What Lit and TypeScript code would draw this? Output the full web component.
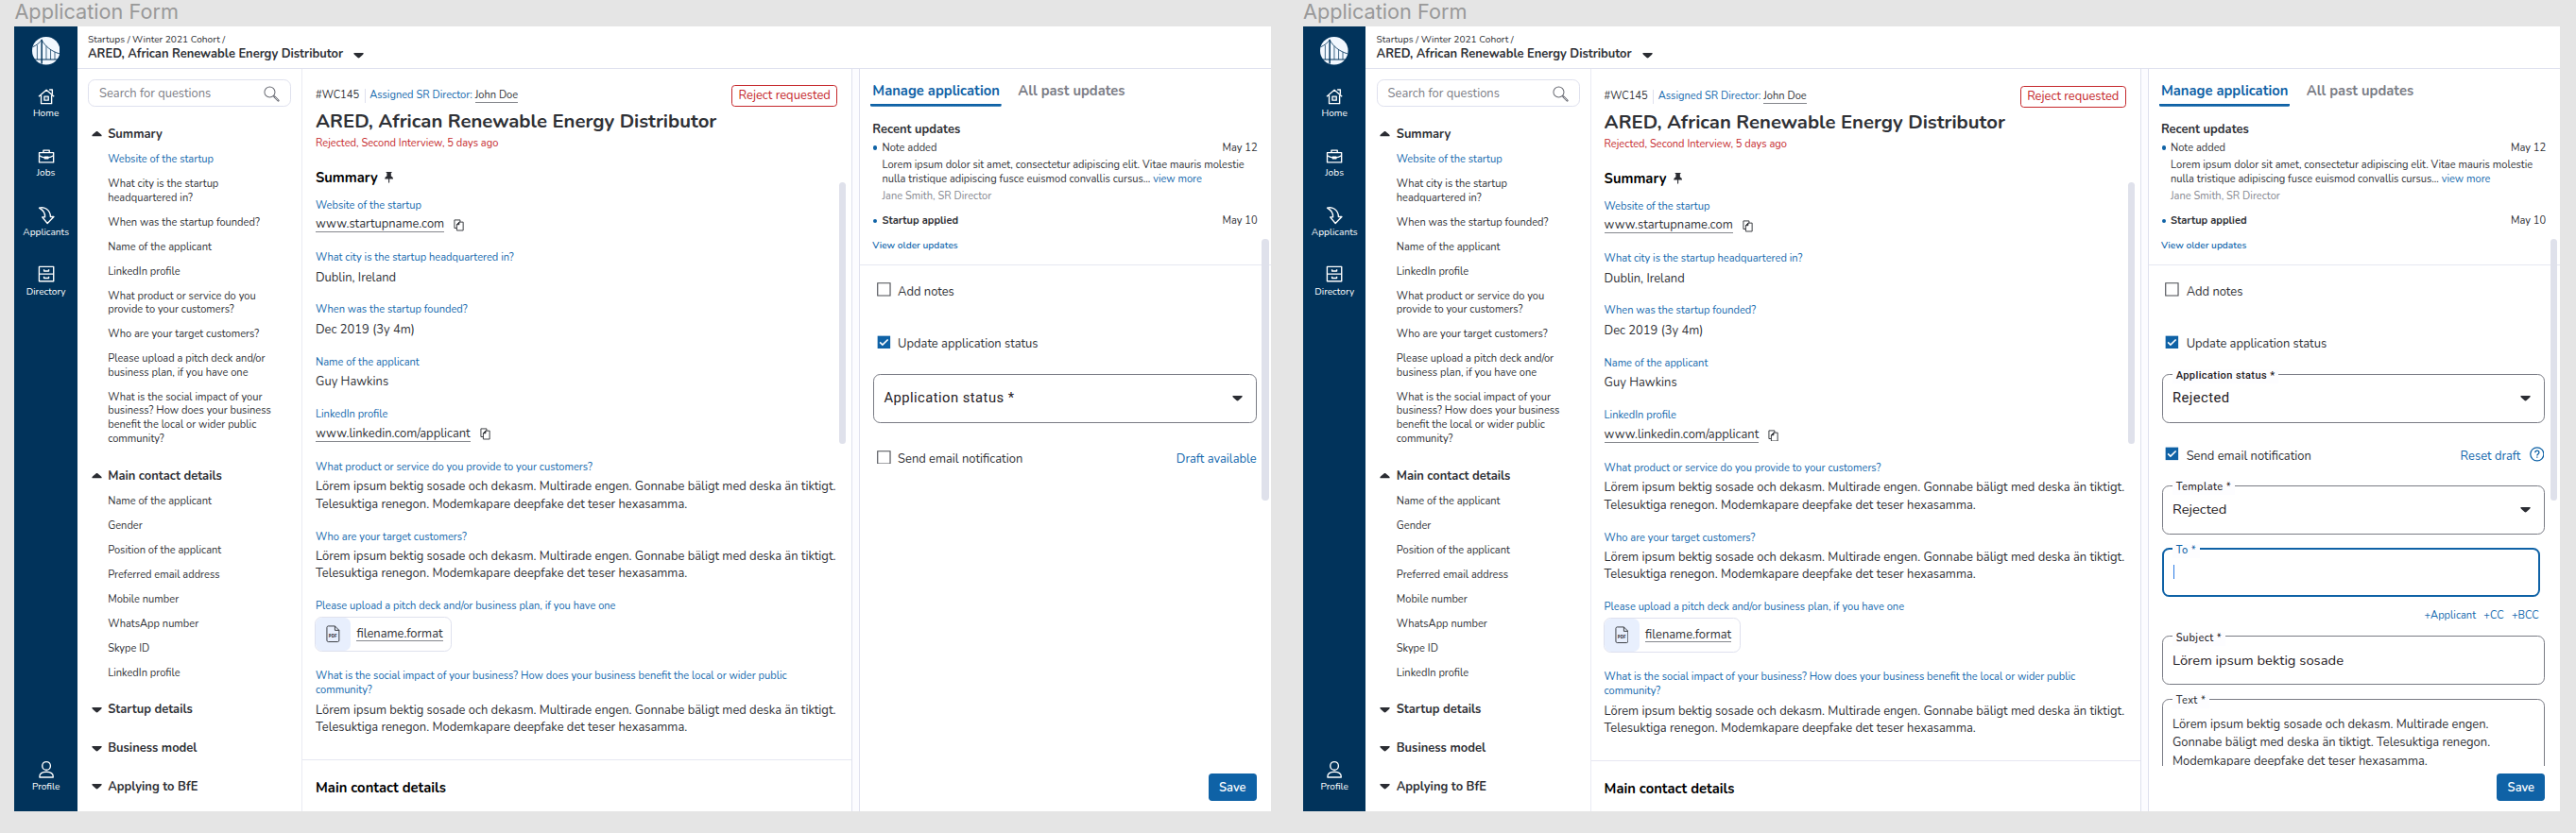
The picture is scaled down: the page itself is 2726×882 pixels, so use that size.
import { LitElement, html, css, svg, nothing } from "lit";
import { customElement, property } from "lit/decorators.js";
import { classMap } from "lit/directives/class-map.js";

const LOREM = "Lörem ipsum bektig sosade och dekasm. Multirade engen. Gonnabe bäligt med deska än tiktigt. Telesuktiga renegon. Modemkapare deepfake det teser hexasamma.";

const SECTIONS = [
  {
    title: "Summary",
    open: true,
    items: [
      "Website of the startup",
      "What city is the startup headquartered in?",
      "When was the startup founded?",
      "Name of the applicant",
      "LinkedIn profile",
      "What product or service do you provide to your customers?",
      "Who are your target customers?",
      "Please upload a pitch deck and/or business plan, if you have one",
      "What is the social impact of your business? How does your business benefit the local or wider public community?",
    ],
  },
  {
    title: "Main contact details",
    open: true,
    items: [
      "Name of the applicant",
      "Gender",
      "Position of the applicant",
      "Preferred email address",
      "Mobile number",
      "WhatsApp number",
      "Skype ID",
      "LinkedIn profile",
    ],
  },
  { title: "Startup details", open: false, items: [] },
  { title: "Business model", open: false, items: [] },
  { title: "Applying to BfE", open: false, items: [] },
];

const ANSWERS = [
  { question: "Website of the startup", answer: "www.startupname.com", kind: "link" },
  { question: "What city is the startup headquartered in?", answer: "Dublin, Ireland", kind: "text" },
  { question: "When was the startup founded?", answer: "Dec 2019 (3y 4m)", kind: "text" },
  { question: "Name of the applicant", answer: "Guy Hawkins", kind: "text" },
  { question: "LinkedIn profile", answer: "www.linkedin.com/applicant", kind: "link" },
  { question: "What product or service do you provide to your customers?", answer: LOREM, kind: "text" },
  { question: "Who are your target customers?", answer: LOREM, kind: "text" },
  { question: "Please upload a pitch deck and/or business plan, if you have one", answer: "filename.format", kind: "file" },
  { question: "What is the social impact of your business? How does your business benefit the local or wider public community?", answer: LOREM, kind: "text" },
];

const icons = {
  home: svg`<path d="M3.2 12.2 12 4.6l8.8 7.6M6 10.8v9.4h12v-9.4M15.8 5v-.6h3v5.2"/><path d="M9.7 12h4.6v4.4H9.7z"/><path d="M11.7 13.9h.6"/>`,
  jobs: svg`<path d="M3.8 8.2h16.4v11.2H3.8z"/><path d="M8.6 8V5.6h6.8V8M3.8 11.6c2.6 1.9 5.2 2.4 8.2 2.4s5.600-.5 8.200-2.400"/><path d="M10 13.300h4v1.600h-4z"/>`,
  applicants: svg`<path d="M3.800 3.400C9 1.700 16.600 5 16.700 13.600h3.800l-7.300 7.500-6-7.100h3.200C10.800 9.500 8.400 6 3.800 3.400z"/>`,
  directory: svg`<path d="M3.700 3.700h16.600v16.600H3.700zM3.700 12h16.600M9.300 6.700v1.900h5.400V6.700M9.300 14.900v1.900h5.400v-1.900"/>`,
  profile: svg`<circle cx="12" cy="7.500" r="4.700"/><path d="M4.200 20.600c-.5-4.300 3-6.200 7.800-6.200s8.300 1.900 7.800 6.200z"/>`,
};

const MENU = [
  { label: "Home", icon: icons.home },
  { label: "Jobs", icon: icons.jobs },
  { label: "Applicants", icon: icons.applicants },
  { label: "Directory", icon: icons.directory },
];

const caret = (up = false) => html`<svg class="caret" width="12" height="8" viewBox="0 0 12 8">
  ${up
    ? svg`<path d="M.6 6.900C.2 6.200.600 5.300 1.300 4.700L4.900 1.500c.7-.6 1.500-.6 2.200 0l3.600 3.200c.7.6 1.100 1.500.7 2.200z" fill="#2b2d33"/>`
    : svg`<path d="M.6 1.100C.2 1.800.600 2.700 1.300 3.300L4.900 6.500c.7.6 1.500.6 2.200 0l3.600-3.200c.7-.6 1.100-1.500.7-2.200z" fill="#2b2d33"/>`}
</svg>`;

@customElement("application-frame")
export class ApplicationFrame extends LitElement {
  static styles = css`
    :host {
      display: flex;
      zoom: 0.9236;
      width: 1440px;
      height: 900px;
      overflow: hidden;
      background: #fff;
      color: #2f3136;
      font: 400 12px/16px Nunito, "Open Sans", sans-serif;
    }

    * {
      box-sizing: border-box;
    }

    /* dark menu */
    .menu {
      width: 72px;
      flex: none;
      background: #01335b;
      color: #fff;
      display: flex;
      flex-direction: column;
      align-items: center;
      gap: 28px;
      padding: 12px 0 20px;
      font-size: 11px;
    }

    .menu__logo {
      margin-bottom: -4px;
    }

    .menu__item {
      display: flex;
      flex-direction: column;
      align-items: center;
    }

    .menu__item--last {
      margin-top: auto;
    }

    .menu__icon {
      width: 24px;
      height: 24px;
      fill: none;
      stroke: #fff;
      stroke-width: 1.5;
      stroke-linejoin: round;
    }

    .main {
      flex: 1;
      display: flex;
      flex-direction: column;
      min-width: 0;
    }

    .header {
      height: 48px;
      flex: none;
      padding: 8px 12px 0;
      border-bottom: 1px solid #dfe1ee;
    }

    .header__path {
      font-size: 11px;
      line-height: 15px;
    }

    .header__title {
      display: flex;
      align-items: center;
      gap: 12px;
      font-size: 14px;
      line-height: 19px;
      font-weight: 700;
    }

    .body {
      flex: 1;
      display: flex;
      min-height: 0;
    }

    /* question list */
    .questions {
      width: 258px;
      flex: none;
      padding: 12px 12px 0;
      border-right: 1px solid #eaebf3;
    }

    .search {
      display: flex;
      align-items: center;
      justify-content: space-between;
      height: 32px;
      padding: 2px 12px 0;
      margin-bottom: 21.4px;
      border: 1px solid #dfe1ee;
      border-radius: 8px;
      color: #7b7d86;
      font-size: 14px;
    }

    .section {
      margin-bottom: 24px;
    }

    .section__title {
      display: flex;
      align-items: center;
      gap: 7px;
      padding-left: 4px;
      font-size: 14px;
      line-height: 20px;
      font-weight: 700;
    }

    .section__items {
      display: flex;
      flex-direction: column;
      gap: 12px;
      padding: 12px 10px 0 23px;
    }

    .section__item--active {
      color: #1268ad;
    }

    /* answers */
    .details {
      position: relative;
      width: 630px;
      flex: none;
      border-right: 1px solid #dfe1ee;
      display: flex;
      flex-direction: column;
    }

    .details__head {
      display: flex;
      justify-content: space-between;
      align-items: flex-start;
      padding: 19.4px 16px 0 15px;
    }

    .details--lower .details__head {
      padding-top: 20.5px;
    }

    .details__meta {
      display: flex;
      align-items: center;
      gap: 5px;
      padding-top: 4px;
    }

    .details__id {
      padding-right: 6px;
      border-right: 1px solid #dfe1ee;
    }

    .blue {
      color: #1268ad;
    }

    .underlined {
      border-bottom: 1px solid #85878d;
      line-height: 16px;
    }

    .badge {
      height: 24px;
      padding: 0 7px;
      border: 1px solid #c5282c;
      border-radius: 4px;
      color: #c5282c;
      font-size: 14px;
      line-height: 23px;
    }

    .details__title {
      width: max-content;
      margin: 3px 0 1.600px 15px;
      font-size: 22px;
      line-height: 30px;
      font-weight: 700;
    }

    .details__status {
      padding-left: 15px;
      color: #c5282c;
    }

    .details__heading {
      display: flex;
      align-items: center;
      gap: 8px;
      margin: 0;
      padding-left: 15px;
      color: #000;
      font-size: 16px;
      line-height: 22px;
      font-weight: 700;
    }

    .details__heading--summary {
      margin-top: 20.6px;
    }

    .answers {
      display: flex;
      flex-direction: column;
      gap: 20px;
      padding: 13px 16px 26.5px 15px;
      border-bottom: 1px solid #e6e7f1;
      margin-bottom: 20.2px;
    }

    .answer {
      display: flex;
      flex-direction: column;
      align-items: flex-start;
      gap: 4px;
    }

    .answer__question {
      color: #1268ad;
    }

    .answer__value {
      display: flex;
      align-items: center;
      gap: 11px;
      min-height: 20px;
      font-size: 14px;
      line-height: 20px;
    }

    .file {
      display: flex;
      align-items: center;
      gap: 7px;
      width: 157px;
      height: 41px;
      margin: -1.500px 0 0.500px -1px;
      border: 1px solid #dfe1ee;
      border-radius: 8px;
      font-size: 14px;
      overflow: hidden;
    }

    .file__type {
      display: flex;
      align-items: center;
      justify-content: center;
      width: 40px;
      height: 100%;
      border-radius: 7px;
      background: #e8effd;
    }

    .file__label {
      font: 700 5px "Open Sans", sans-serif;
      fill: #2b2d33;
    }

    .scrollbar {
      position: absolute;
      width: 8px;
      height: 300px;
      border-radius: 4px;
      background: #dfe1eb;
    }

    .scrollbar--details {
      top: 130.5px;
      right: 6px;
    }

    .scrollbar--manage {
      top: 195.5px;
      right: 3px;
    }

    .gutter {
      width: 8px;
      flex: none;
      background: #fcfcff;
    }

    /* right panel */
    .manage {
      position: relative;
      flex: 1;
      min-width: 0;
      display: flex;
      flex-direction: column;
      border-left: 1px solid #dfe1ee;
    }

    .tabs {
      display: flex;
      gap: 17px;
      padding: 15px 0 0 12px;
      font-size: 16px;
      line-height: 22px;
      font-weight: 700;
      color: #7b7d86;
    }

    .tabs__tab {
      padding: 0 2px 4px;
      height: 29px;
    }

    .tabs__tab--active {
      color: #0f62a6;
      background: linear-gradient(#0f62a6, #0f62a6) bottom / 100% 3px no-repeat;
      border-radius: 2px;
    }

    .updates {
      padding: 16.5px 16px 13.5px 14px;
      border-bottom: 1px solid #e6e7f1;
    }

    .updates__heading {
      margin: 0 0 3px;
      font-size: 14px;
      line-height: 20px;
      font-weight: 700;
    }

    .updates__row {
      display: flex;
      align-items: center;
    }

    .updates__row::before {
      content: "";
      width: 4.500px;
      height: 4.500px;
      margin: -1px 5.500px 0 1px;
      border-radius: 50%;
      background: #0f62a6;
    }

    .updates__date {
      margin-left: auto;
    }

    .updates__note {
      padding: 4px 0 4px 11px;
    }

    .updates__author {
      padding-left: 11px;
      margin-bottom: 12px;
      color: #85878f;
    }

    .bold {
      font-weight: 700;
    }

    .updates__older {
      margin-top: 12px;
      font-size: 11px;
      font-weight: 600;
      color: #1268ad;
    }

    .form {
      flex: 1;
      min-height: 0;
      overflow: hidden;
      padding: 19px 17px 0 15px;
    }

    .check {
      display: flex;
      align-items: center;
      height: 20px;
      padding-top: 2px;
      margin-bottom: 40px;
      font-size: 14px;
    }

    .check--status {
      margin-bottom: 25px;
    }

    .check--email {
      margin: 31px 0 0;
    }

    .check--email-open {
      margin: 27.5px 0 24.5px;
    }

    .check__box {
      width: 16px;
      height: 16px;
      margin: -5px 8px 0 4px;
    }

    .check__action {
      display: flex;
      align-items: center;
      gap: 10px;
      margin-left: auto;
      color: #1268ad;
    }

    .check__help {
      margin: -4px 1px 0 0;
    }

    .field {
      position: relative;
      display: flex;
      align-items: center;
      justify-content: space-between;
      height: 56px;
      padding: 0 15px 0 11px;
      margin-bottom: 16px;
      border: 1px solid #797b84;
      border-radius: 8px;
      font-size: 16px;
      color: #1f2024;
    }

    .field--roboto {
      font-family: Roboto, sans-serif;
      letter-spacing: 0.5px;
    }

    .field--focused {
      width: 433px;
      margin-bottom: 14px;
      border: 2.200px solid #0f62a6;
    }

    .field--tall {
      height: 140px;
      align-items: flex-start;
      padding-top: 18.500px;
      font-size: 14px;
      line-height: 21px;
      color: #2f3136;
    }

    .field__label {
      position: absolute;
      top: -6px;
      left: 11px;
      padding: 0 4px;
      background: #fdfdff;
      font-size: 12px;
      line-height: 16px;
      font-weight: 500;
      letter-spacing: 0.4px;
    }

    .field--focused .field__label {
      top: -7px;
      left: 10px;
      color: #0f62a6;
    }

    .field__cursor {
      width: 1.100px;
      height: 17px;
      margin-bottom: 2px;
      background: #2c7be5;
    }

    .recipients {
      display: flex;
      justify-content: flex-end;
      gap: 9px;
      width: 432px;
      margin-bottom: 14.500px;
      color: #1268ad;
    }

    .footer {
      height: 52px;
      flex: none;
      display: flex;
      justify-content: flex-end;
      padding: 8px 17px 0 0;
    }

    .save {
      width: 55px;
      height: 32px;
      border: 0;
      border-radius: 4px;
      background: #0f62a6;
      color: #fff;
      font: 600 14px/20px Nunito, "Open Sans", sans-serif;
      padding: 1px 0 0;
    }
  `;

  // true shows the form with the email fields opened
  @property({ type: Boolean })
  rejected = false;

  renderMenu() {
    return html`<nav class="menu">
      <svg class="menu__logo" width="32" height="32" viewBox="0 0 32 32">
        <circle cx="16" cy="16" r="16" fill="#f2f8ff"/>
        <g fill="none" stroke="#01335b">
          <path d="M1 11.500C5 9.500 8.500 7 11 3.600c4 7.400 11 13 20.500 15.800" stroke-width=".9"/>
          <path d="M1.500 26h29" stroke-width="1.100"/>
          <path d="M11 3v28" stroke-width="1.600"/>
          <path d="M5.800 9.500V26M16.200 10.500V26M21.200 14.800V26M26 17.500V26" stroke-width=".8"/>
        </g>
      </svg>
      ${MENU.map((item) => html`<div class="menu__item">
        <svg class="menu__icon" viewBox="0 0 24 24">${item.icon}</svg>
        <span>${item.label}</span>
      </div>`)}
      <div class="menu__item menu__item--last">
        <svg class="menu__icon" viewBox="0 0 24 24">${icons.profile}</svg>
        <span>Profile</span>
      </div>
    </nav>`;
  }

  renderQuestions() {
    return html`<aside class="questions">
      <div class="search">
        <span>Search for questions</span>
        <svg width="18" height="18" viewBox="0 0 18 18" fill="none" stroke="#696b73">
          <circle cx="7" cy="7" r="6" stroke-width="1.100"/>
          <path d="m11.300 11.300 1.200 1.200" stroke-width="1.100"/>
          <path d="m12.500 12.500 4.300 4.300" stroke-width="2.400" stroke-linecap="round"/>
          <path d="m12.800 12.800 3.800 3.800" stroke="#fff" stroke-width=".7"/>
        </svg>
      </div>
      ${SECTIONS.map((section, s) => html`<div class="section">
        <div class="section__title">${caret(section.open)}${section.title}</div>
        ${section.open ? html`<div class="section__items">
          ${section.items.map((item, i) => html`<div class=${classMap({ "section__item--active": s === 0 && i === 0 })}>${item}</div>`)}
        </div>` : nothing}
      </div>`)}
    </aside>`;
  }

  renderValue(answer: string, kind: string) {
    switch (kind) {
      case "link":
        return html`<div class="answer__value">
          <span class="underlined">${answer}</span>
          <svg width="12" height="14" viewBox="0 0 12 14" fill="none" stroke="#2f3136">
            <path d="M3.600 10.300H1V1h6.500v2.300"/>
            <path d="M6.400 3.400H11V13H3.700V6.200z"/>
            <path d="M6.400 3.400v2.800H3.700z" fill="#2f3136"/>
          </svg>
        </div>`;
      case "file":
        return html`<div class="file">
          <span class="file__type">
            <svg width="16" height="20" viewBox="0 0 16 20" fill="none" stroke="#2f3136">
              <path d="M2.500 1h7.700L15 5.800v11.700c0 .8-.7 1.500-1.500 1.500h-11C1.700 19 1 18.300 1 17.500v-15C1 1.700 1.700 1 2.500 1z"/>
              <path d="M10.200 1v4.800H15"/>
              <text class="file__label" x="3" y="14.500" stroke="none">PDF</text>
            </svg>
          </span>
          <span class="underlined">${answer}</span>
        </div>`;
      default:
        return html`<div class="answer__value">${answer}</div>`;
    }
  }

  renderDetails() {
    return html`<section class=${classMap({ details: true, "details--lower": this.rejected })}>
      <div class="details__head">
        <div class="details__meta">
          <span class="details__id">#WC145</span>
          <span><span class="blue">Assigned SR Director:</span> <span class="underlined">John Doe</span></span>
        </div>
        <span class="badge">Reject requested</span>
      </div>
      <h1 class="details__title">ARED, African Renewable Energy Distributor</h1>
      <div class="details__status">Rejected, Second Interview, 5 days ago</div>
      <h2 class="details__heading details__heading--summary">
        Summary
        <svg width="10" height="13" viewBox="0 0 10 13" fill="#2b2d33">
          <path d="M1.800 0h6.400v1.200H7.400v3.600C9 5.600 9.800 6.700 9.800 8.200H5.600V12l-.6 1-.6-1V8.200H.2c0-1.500.8-2.600 2.400-3.400V1.200h-.8z"/>
        </svg>
      </h2>
      <div class="answers">
        ${ANSWERS.map((a) => html`<div class="answer">
          <div class="answer__question">${a.question}</div>
          ${this.renderValue(a.answer, a.kind)}
        </div>`)}
      </div>
      <h2 class="details__heading">Main contact details</h2>
      <div class="scrollbar scrollbar--details"></div>
    </section>`;
  }

  renderBox(checked: boolean) {
    return html`<svg class="check__box" viewBox="0 0 16 16" fill="none">
      ${checked
        ? svg`<path d="M.7.700h14.600v14.600H.7z" fill="#0f62a6"/><path d="m3.400 8 3 3 6.200-6.200" stroke="#fff" stroke-width="1.700"/>`
        : svg`<path d="M.8.800h14.400v14.400H.8z" stroke="#4a4c52" stroke-width="1.200"/>`}
    </svg>`;
  }

  renderEmailFields() {
    return html`
      <div class="field"><span class="field__label">Template *</span>Rejected ${caret()}</div>
      <div class="field field--focused"><span class="field__label">To *</span><span class="field__cursor"></span></div>
      <div class="recipients"><span>+Applicant</span><span>+CC</span><span>+BCC</span></div>
      <div class="field"><span class="field__label">Subject *</span>Lörem ipsum bektig sosade</div>
      <div class="field field--tall">
        <span class="field__label">Text *</span>
        <span>Lörem ipsum bektig sosade och dekasm. Multirade engen.<br>Gonnabe bäligt med deska än tiktigt. Telesuktiga renegon.<br>Modemkapare deepfake det teser hexasamma.</span>
      </div>
    `;
  }

  renderManage() {
    return html`<section class="manage">
      <div class="tabs">
        <span class="tabs__tab tabs__tab--active">Manage application</span>
        <span class="tabs__tab">All past updates</span>
      </div>
      <div class="updates">
        <h3 class="updates__heading">Recent updates</h3>
        <div class="updates__row"><span>Note added</span><span class="updates__date">May 12</span></div>
        <div class="updates__note">Lorem ipsum dolor sit amet, consectetur adipiscing elit. Vitae mauris molestie nulla tristique adipiscing fusce euismod convallis cursus... <span class="blue">view more</span></div>
        <div class="updates__author">Jane Smith, SR Director</div>
        <div class="updates__row"><span class="bold">Startup applied</span><span class="updates__date">May 10</span></div>
        <div class="updates__older">View older updates</div>
      </div>
      <div class="form">
        <div class="check">${this.renderBox(false)}Add notes</div>
        <div class="check check--status">${this.renderBox(true)}Update application status</div>
        <div class="field field--roboto">
          ${this.rejected
            ? html`<span class="field__label">Application status *</span>Rejected`
            : html`<span>Application status *</span>`}
          ${caret()}
        </div>
        <div class="check ${this.rejected ? "check--email-open" : "check--email"}">
          ${this.renderBox(this.rejected)}Send email notification
          <span class="check__action">
            ${this.rejected ? html`Reset draft
              <svg class="check__help" width="17" height="17" viewBox="0 0 16 16" fill="none" stroke="#0f62a6" stroke-width="1.300">
                <circle cx="8" cy="8" r="7.200"/>
                <path d="M5.900 6.500C5.900 5.200 6.800 4.300 8 4.300s2.100.8 2.100 2c0 1.500-2.100 1.700-2.100 3.300M8 10.700V12"/>
              </svg>` : "Draft available"}
          </span>
        </div>
        ${this.rejected ? this.renderEmailFields() : nothing}
      </div>
      <div class="footer"><button class="save">Save</button></div>
      <div class="scrollbar scrollbar--manage"></div>
    </section>`;
  }

  render() {
    return html`${this.renderMenu()}
      <div class="main">
        <header class="header">
          <div class="header__path">Startups / Winter 2021 Cohort /</div>
          <div class="header__title">ARED, African Renewable Energy Distributor ${caret()}</div>
        </header>
        <div class="body">
          ${this.renderQuestions()}
          ${this.renderDetails()}
          <div class="gutter"></div>
          ${this.renderManage()}
        </div>
      </div>`;
  }
}

@customElement("app-root")
export class AppRoot extends LitElement {
  static styles = css`
    :host {
      display: flex;
      gap: 33.6px;
      box-sizing: border-box;
      height: 882px;
      padding-left: 15.4px;
      background: #e5e5e5;
      overflow: hidden;
    }

    .artboard__name {
      height: 28.2px;
      color: #999;
      font: 400 21.7px/25px Inter, sans-serif;
    }
  `;

  render() {
    return html`
      <div class="artboard">
        <div class="artboard__name">Application Form</div>
        <application-frame></application-frame>
      </div>
      <div class="artboard">
        <div class="artboard__name">Application Form</div>
        <application-frame rejected></application-frame>
      </div>
    `;
  }
}
